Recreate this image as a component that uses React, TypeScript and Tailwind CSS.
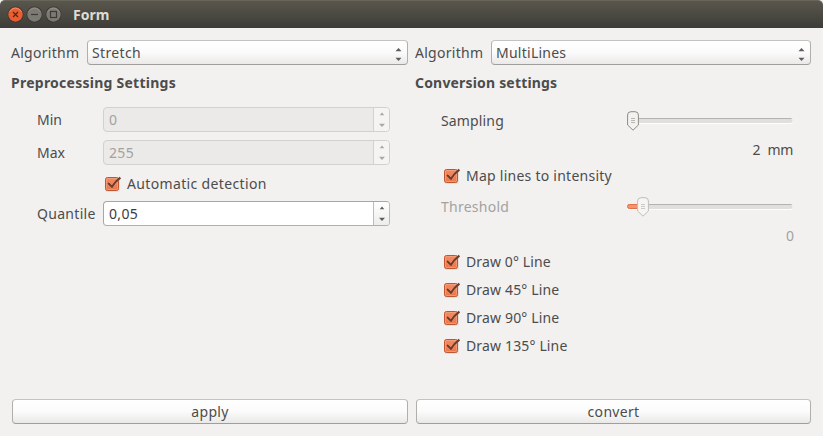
import React from "react";

function Arrows() {
  return (
    <svg width="7" height="13" viewBox="0 0 7 13" fill="#5e5d5b" className="shrink-0">
      <path d="M0.5 3.2 3.5 0 6.5 3.2z" />
      <path d="M0.5 9.8 3.5 13 6.5 9.8z" />
    </svg>
  );
}

function Combo({ value, spacing }: { value: string; spacing: string }) {
  return (
    <div className="flex h-[25px] flex-1 items-center justify-between rounded-[4px] border border-t-[#c5c3c1] border-r-[#b1afac] border-b-[#a09e9b] border-l-[#b1afac] bg-linear-to-b from-white via-[#fbfbfb] to-[#eae9e8] pr-[5px] pl-1">
      <span className={spacing}>{value}</span>
      <span className="pt-1">
        <Arrows />
      </span>
    </div>
  );
}

function Spin({ value, disabled = false }: { value: string; disabled?: boolean }) {
  return (
    <div
      className={
        disabled
          ? "flex h-[25px] w-[287px] overflow-hidden rounded-[4px] border border-[#d3d1cf] bg-[#ebeae9] text-[#a3a2a0]"
          : "flex h-[25px] w-[287px] overflow-hidden rounded-[4px] border border-t-[#a9a7a4] border-r-[#bebcb9] border-b-[#b1afac] border-l-[#a9a7a4] bg-white text-[#3c3c3c]"
      }
    >
      <span className="flex-1 pl-[5px] leading-[24px] tracking-[0.35px]">{value}</span>
      <span
        className={
          disabled
            ? "flex w-4 items-center justify-center border-l border-[#d3d1cf] bg-[#f5f4f3]"
            : "flex w-4 items-center justify-center border-l border-[#bebcb9] bg-linear-to-b from-white to-[#eeedec]"
        }
      >
        <svg width="6" height="15" viewBox="0 0 6 15" fill={disabled ? "#a9a8a7" : "#5e5d5b"}>
          <path d="M0.7 3.2 3 0.4 5.3 3.2z" />
          <path d="M0 11.8 3 15 6 11.8z" />
        </svg>
      </span>
    </div>
  );
}

function Check({ label, spacing }: { label: string; spacing: string }) {
  return (
    <div className="flex items-center">
      <svg width="17" height="16" viewBox="0 0 17 16" className="mr-[6px] shrink-0">
        <defs>
          <linearGradient id="box" x1="0" y1="0" x2="0" y2="1">
            <stop offset="0" stopColor="#f58a62" />
            <stop offset="1" stopColor="#ee7649" />
          </linearGradient>
        </defs>
        <rect x="1" y="1" width="15" height="15" rx="2.5" fill="#e3e0dd" />
        <rect x="1.5" y="1.5" width="13" height="13" rx="2" fill="url(#box)" stroke="#bd572f" />
        <rect x="2.5" y="2.5" width="11" height="11" rx="1" fill="none" stroke="#f9a988" strokeOpacity="0.6" />
        <path d="M4 7 8 10.8Q11 5.5 16.4 1.6" fill="none" stroke="#fbb397" strokeWidth="3" strokeOpacity="0.45" />
        <path d="M4 7 8 10.8Q11 5.5 16.4 1.6" fill="none" stroke="#693c2b" strokeWidth="2" />
      </svg>
      <span className={spacing}>{label}</span>
    </div>
  );
}

function Slider({ disabled = false }: { disabled?: boolean }) {
  const x = disabled ? 10 : 0;
  return (
    <svg width="166" height="20" viewBox="0 0 166 20" className="shrink-0">
      <rect x="0" y="8" width="165.5" height="5" rx="2" fill="#fdfdfd" />
      <rect x="0" y="7" width="165.5" height="5" rx="2" fill="#e1dfdd" />
      <path d="M1 7.5H164.5" stroke="#b5b3b0" />
      {disabled && <rect x="0.5" y="7.5" width="16" height="4" rx="2" fill="#f3946f" stroke="#e0714a" />}
      <path
        d={`M${x + 4} .7H${x + 8}Q${x + 11.4} .7 ${x + 11.4} 4V14L${x + 6} 19.2 ${x + 0.6} 14V4Q${x + 0.6} .7 ${x + 4} .7Z`}
        fill={disabled ? "#f6f5f4" : "#f3f2f1"}
        stroke={disabled ? "#bfbdba" : "#8d8b87"}
      />
      <path
        d={`M${x + 4} 7.5h4M${x + 4} 9.5h4M${x + 4} 11.5h4`}
        stroke={disabled ? "#cbc9c6" : "#b9b7b4"}
      />
    </svg>
  );
}

function WindowButton({ kind }: { kind: "close" | "min" | "max" }) {
  const close = kind === "close";
  return (
    <svg width="17" height="17" viewBox="0 0 17 17">
      <circle cx="8.5" cy="8.5" r="8" fill="#3a3934" />
      <circle cx="8.5" cy="8.5" r="7.2" fill={close ? "#e95e31" : "#7c7a72"} />
      <path d="M2.5 6A6.6 6.6 0 0 1 14.5 6" fill="none" stroke={close ? "#f58b65" : "#929087"} />
      <g stroke={close ? "#552312" : "#3c3b37"} strokeWidth="1.2" fill="none">
        {close && <path d="M6 6l5 5M11 6l-5 5" />}
        {kind === "min" && <path d="M5 8.5h7" />}
        {kind === "max" && <rect x="5.5" y="5.5" width="6" height="6" />}
      </g>
    </svg>
  );
}

function PushButton({ label }: { label: string }) {
  return (
    <button className="h-[25px] w-full rounded-[4px] border border-t-[#c5c3c1] border-r-[#b1afac] border-b-[#a09e9b] border-l-[#b1afac] bg-linear-to-b from-white via-[#fbfbfb] to-[#eae9e8] leading-[23px] tracking-[0.3px]">
      {label}
    </button>
  );
}

export default function App() {
  return (
    <div className="flex h-[436px] w-[823px] flex-col overflow-hidden bg-[#f2f1f0] font-['Noto_Sans',sans-serif] text-[14px] leading-[18px] whitespace-nowrap text-[#4c4c4c]">
      <header className="flex h-7 shrink-0 items-center rounded-t-[5px] border-t border-[#68665a] bg-linear-to-b from-[#59574c] to-[#3d3c38] pl-[7px]">
        <div className="flex gap-[2px]">
          <WindowButton kind="close" />
          <WindowButton kind="min" />
          <WindowButton kind="max" />
        </div>
        <span className="ml-[11px] pt-px font-bold text-[#dfdbd2]">Form</span>
      </header>

      <main className="flex flex-1 gap-[7px] pt-3 pr-3 pl-[11px]">
        <section className="flex w-[397px] flex-col">
          <div className="flex items-center">
            <span className="w-[76px] tracking-[0.28px]">Algorithm</span>
            <Combo value="Stretch" spacing="tracking-[0.35px]" />
          </div>
          <h2 className="mt-[9px] font-bold tracking-[0.25px]">Preprocessing Settings</h2>
          <div className="mt-[15px] flex items-center pl-[26px]">
            <span className="w-[66px]">Min</span>
            <Spin value="0" disabled />
          </div>
          <div className="mt-2 flex items-center pl-[26px]">
            <span className="w-[66px]">Max</span>
            <Spin value="255" disabled />
          </div>
          <div className="flex h-9 items-center pt-px pl-[93px]">
            <Check label="Automatic detection" spacing="tracking-[0.35px]" />
          </div>
          <div className="flex items-center pl-[26px]">
            <span className="w-[66px] tracking-[0.3px]">Quantile</span>
            <Spin value="0,05" />
          </div>
          <div className="mt-auto mb-3 pl-px">
            <PushButton label="apply" />
          </div>
        </section>

        <section className="flex flex-1 flex-col">
          <div className="flex items-center">
            <span className="w-[76px] tracking-[0.28px]">Algorithm</span>
            <Combo value="MultiLines" spacing="tracking-[0.25px]" />
          </div>
          <h2 className="mt-[9px] font-bold tracking-[0.18px]">Conversion settings</h2>
          <div className="mt-[15px] flex h-7 items-center justify-between pr-[18px] pl-[26px]">
            <span className="tracking-[0.15px]">Sampling</span>
            <Slider />
          </div>
          <div className="mt-px flex h-7 items-center justify-end gap-[7px] pr-[18px]">
            <span>2</span>
            <span className="tracking-[-0.3px]">mm</span>
          </div>
          <div className="flex h-[23px] items-center pl-7">
            <Check label="Map lines to intensity" spacing="tracking-[0.25px]" />
          </div>
          <div className="flex h-[39px] items-center justify-between pr-[18px] pl-[26px] text-[#a3a2a0]">
            <span className="tracking-[0.25px]">Threshold</span>
            <Slider disabled />
          </div>
          <div className="h-5 pt-px pr-[17px] text-right text-[#a3a2a0]">0</div>
          <div className="mt-[2px] flex flex-col pl-7">
            <div className="flex h-7 items-center">
              <Check label="Draw 0° Line" spacing="tracking-[0.12px]" />
            </div>
            <div className="flex h-7 items-center">
              <Check label="Draw 45° Line" spacing="tracking-[0.15px]" />
            </div>
            <div className="flex h-7 items-center">
              <Check label="Draw 90° Line" spacing="tracking-[0.15px]" />
            </div>
            <div className="flex h-7 items-center">
              <Check label="Draw 135° Line" spacing="tracking-[0.15px]" />
            </div>
          </div>
          <div className="mt-auto mb-3 pl-px">
            <PushButton label="convert" />
          </div>
        </section>
      </main>
    </div>
  );
}
